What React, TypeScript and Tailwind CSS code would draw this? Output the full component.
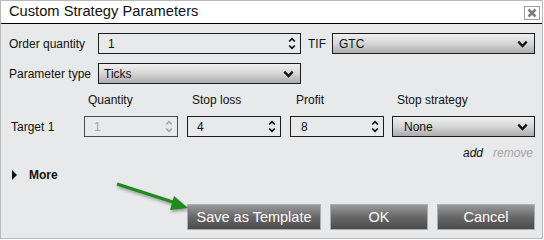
import React from 'react'

function Spin({ disabled = false }: { disabled?: boolean }) {
    const c = disabled ? '#a8a8a8' : '#111'
    return (
        <svg width="8" height="13" viewBox="0 0 8 13" className="shrink-0">
            <polyline points="1.2,4.5 4,1.6 6.8,4.5" fill="none" stroke={c} strokeWidth="1.7" />
            <polyline points="1.2,8.5 4,11.4 6.8,8.5" fill="none" stroke={c} strokeWidth="1.7" />
        </svg>
    )
}

function Chevron() {
    return (
        <svg width="11" height="8" viewBox="0 0 11 8" className="shrink-0">
            <polyline points="1.3,1.6 5.5,6 9.7,1.6" fill="none" stroke="#111" strokeWidth="2.3" />
        </svg>
    )
}

function NumInput({ value, width, pad, disabled = false }: { value: string; width: string; pad: string; disabled?: boolean }) {
    return (
        <div className={`${width} h-[21px] flex items-center justify-between border ${disabled ? 'border-[#4a4a4a] text-[#a3a3a3]' : 'border-[#1c1c1c] text-[#111]'} bg-[#e8e9ea] pr-[4px] ${pad}`}>
            <span>{value}</span>
            <Spin disabled={disabled} />
        </div>
    )
}

function Select({ value, width, pad }: { value: string; width: string; pad: string }) {
    return (
        <div className={`${width} h-[21px] flex items-center justify-between border border-[#1c1c1c] bg-gradient-to-b from-[#f0f0f0] via-[#d6d6d6] to-[#acacac] text-[#111] pr-[6px] ${pad}`}>
            <span>{value}</span>
            <Chevron />
        </div>
    )
}

function DarkButton({ label, width }: { label: string; width: string }) {
    return (
        <button className={`${width} h-[26px] border border-[#adadad] bg-gradient-to-b from-[#9b9b9b] via-[#676767] to-[#4b4b4b] text-white text-[14.5px] leading-none`}>
            {label}
        </button>
    )
}

export default function App() {
    return (
        <div className="w-[544px] h-[240px] bg-white font-['Liberation_Sans',Arial,sans-serif] text-[12px] leading-[18px] text-[#111]">
            <div className="w-[543px] h-[239px] border border-[#b9b9b9] flex flex-col">
                {/* Title bar */}
                <div className="h-[23px] shrink-0 bg-white border-b border-black flex items-center justify-between pl-[8px] pr-[2px]">
                    <span className="text-[14.7px] leading-none text-[#111] mt-[-1px]">Custom Strategy Parameters</span>
                    <div className="w-[16px] h-[14px] border border-[#9c9c9c] flex items-center justify-center mt-[2px]">
                        <svg width="10" height="10" viewBox="0 0 10 10">
                            <path d="M1.5 1.5 L8.5 8.5 M8.5 1.5 L1.5 8.5" stroke="#7c7c7c" strokeWidth="2.6" />
                        </svg>
                    </div>
                </div>

                {/* Body */}
                <div className="relative flex-1 bg-[#e8e9ea] pl-[8px] pt-[9px]">
                    <div className="flex items-center">
                        <span className="w-[89px]">Order quantity</span>
                        <NumInput value="1" width="w-[203px]" pad="pl-[9px]" />
                        <span className="ml-[7px] w-[24px]">TIF</span>
                        <Select value="GTC" width="w-[203px]" pad="pl-[6px]" />
                    </div>

                    <div className="flex items-center mt-[9px]">
                        <span className="w-[89px]">Parameter type</span>
                        <Select value="Ticks" width="w-[203px]" pad="pl-[5px]" />
                    </div>

                    <div className="grid grid-cols-[66px_94px_94px_94px_142px] gap-x-[9px] mt-[7px]">
                        <span></span>
                        <span className="pl-[4px]">Quantity</span>
                        <span className="pl-[5px]">Stop loss</span>
                        <span className="pl-[6px]">Profit</span>
                        <span className="pl-[4px]">Stop strategy</span>
                    </div>

                    <div className="grid grid-cols-[66px_94px_94px_94px_142px] gap-x-[9px] items-center mt-[7px]">
                        <span className="pl-[2px]">Target 1</span>
                        <NumInput value="1" width="w-[94px]" pad="pl-[9px]" disabled />
                        <NumInput value="4" width="w-[94px]" pad="pl-[9px]" />
                        <NumInput value="8" width="w-[94px]" pad="pl-[10px]" />
                        <Select value="None" width="w-[143px] -ml-[1px]" pad="pl-[11px]" />
                    </div>

                    <div className="flex justify-end gap-[10px] pr-[9px] mt-[7px] italic">
                        <span className="text-[#111]">add</span>
                        <span className="text-[#a6a6a6]">remove</span>
                    </div>

                    <div className="flex items-center mt-[4px] pl-[3px]">
                        <svg width="6" height="10" viewBox="0 0 6 10">
                            <polygon points="0,0 5,5 0,10" fill="#111" />
                        </svg>
                        <span className="ml-[11px] font-bold">More</span>
                    </div>

                    <div className="flex justify-end gap-[9px] pr-[7px] mt-[20px]">
                        <DarkButton label="Save as Template" width="w-[134px]" />
                        <DarkButton label="OK" width="w-[98px]" />
                        <DarkButton label="Cancel" width="w-[98px]" />
                    </div>

                    {/* green annotation arrow */}
                    <svg className="absolute left-0 top-0 pointer-events-none" width="200" height="200" viewBox="0 24 200 200">
                        <g style={{ filter: 'drop-shadow(1px 2px 1.5px rgba(0,0,0,0.35))' }}>
                            <line x1="116" y1="184" x2="175" y2="203" stroke="#1f8a1f" strokeWidth="3.2" />
                            <polygon points="187,208 169,210 173,196" fill="#1f8a1f" />
                        </g>
                    </svg>
                </div>
            </div>
        </div>
    )
}
